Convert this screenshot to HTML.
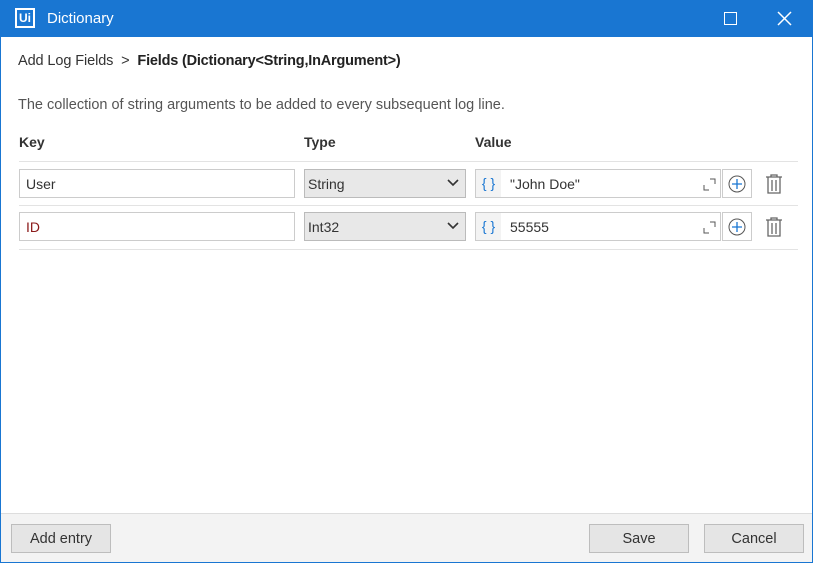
<!DOCTYPE html><html><head><style>
body{margin:0;width:813px;height:563px;overflow:hidden;font-family:"Liberation Sans",sans-serif;font-size:14px;color:#333;background:#fff}
.a{position:absolute;box-sizing:border-box}
.win{left:0;top:0;width:813px;height:563px;border:1px solid #1976d2}
.inp{border:1px solid #ccc;background:#fff;height:29px;padding:6px 6px;}
.sel{background:#e8e8e8;border:1px solid #bbb;height:29px;padding:6px 3px}
.btn{background:#e5e5e5;border:1px solid #bdbdbd;height:29px;text-align:center;line-height:29px;font-size:14.5px}
.hr{height:1px;background:#e3e3e3;left:19px;width:779px}
</style></head><body>
<div class="a win"></div>
<div class="a" style="left:0;top:0;width:813px;height:37px;background:#1976d2"></div>
<div class="a" style="left:15px;top:8px;width:20px;height:20px;border:2px solid #fff;color:#fff;font-size:12px;font-weight:bold;line-height:16px;text-align:center">Ui</div>
<div class="a" style="left:47px;top:10px;color:#fff;font-size:15px">Dictionary</div>
<div class="a" style="left:724px;top:12px;width:13px;height:13px;border:1.5px solid #fff"></div>
<svg class="a" style="left:777px;top:11px" width="15" height="15"><path d="M1 1L14 14M14 1L1 14" stroke="#fff" stroke-width="1.5"/></svg>
<div class="a" style="left:18px;top:53px;font-size:14.5px;letter-spacing:-0.1px">Add Log Fields &nbsp;&gt;&nbsp; <b style="font-weight:bold;color:#222;letter-spacing:-0.2px">Fields (Dictionary&lt;String,InArgument&gt;)</b></div>
<div class="a" style="left:18px;top:97px;color:#555;font-size:14.5px">The collection of string arguments to be added to every subsequent log line.</div>
<div class="a" style="left:19px;top:134px;font-weight:bold">Key</div>
<div class="a" style="left:304px;top:134px;font-weight:bold">Type</div>
<div class="a" style="left:475px;top:134px;font-weight:bold">Value</div>
<div class="a hr" style="top:161px"></div>
<div class="a hr" style="top:205px"></div>
<div class="a hr" style="top:249px"></div>

<div class="a inp" style="left:19px;top:169px;width:276px">User</div>
<div class="a sel" style="left:304px;top:169px;width:162px">String<svg style="position:absolute;right:6px;top:9px" width="12" height="8"><path d="M1 1l5 5 5-5" fill="none" stroke="#333" stroke-width="1.6"/></svg></div>
<div class="a inp" style="left:475px;top:169px;width:246px;padding-left:34px">"John Doe"</div>
<div class="a" style="left:476px;top:170px;width:25px;height:27px;background:#f3f3f3;color:#1976d2;text-align:center;line-height:26px">{ }</div>
<svg class="a" style="left:701px;top:176px" width="16" height="16"><path d="M3 9v5h5M9 3h5v5" fill="none" stroke="#555"/></svg>
<div class="a inp" style="left:722px;top:169px;width:30px"></div>
<svg class="a" style="left:727px;top:174px" width="20" height="20"><circle cx="10" cy="10" r="8" fill="none" stroke="#555"/><path d="M10 5v10M5 10h10" stroke="#1976d2" stroke-width="1.3"/></svg>
<svg class="a" style="left:764px;top:173px" width="20" height="22"><path d="M2 4h16M7 4V2h6v2M4 4v16h12V4M8 7v11M12 7v11" fill="none" stroke="#666" stroke-width="1.3"/></svg>

<div class="a inp" style="left:19px;top:212px;width:276px;color:#8b1a1a">ID</div>
<div class="a sel" style="left:304px;top:212px;width:162px">Int32<svg style="position:absolute;right:6px;top:9px" width="12" height="8"><path d="M1 1l5 5 5-5" fill="none" stroke="#333" stroke-width="1.6"/></svg></div>
<div class="a inp" style="left:475px;top:212px;width:246px;padding-left:34px">55555</div>
<div class="a" style="left:476px;top:213px;width:25px;height:27px;background:#f3f3f3;color:#1976d2;text-align:center;line-height:26px">{ }</div>
<svg class="a" style="left:701px;top:219px" width="16" height="16"><path d="M3 9v5h5M9 3h5v5" fill="none" stroke="#555"/></svg>
<div class="a inp" style="left:722px;top:212px;width:30px"></div>
<svg class="a" style="left:727px;top:217px" width="20" height="20"><circle cx="10" cy="10" r="8" fill="none" stroke="#555"/><path d="M10 5v10M5 10h10" stroke="#1976d2" stroke-width="1.3"/></svg>
<svg class="a" style="left:764px;top:216px" width="20" height="22"><path d="M2 4h16M7 4V2h6v2M4 4v16h12V4M8 7v11M12 7v11" fill="none" stroke="#666" stroke-width="1.3"/></svg>

<div class="a" style="left:1px;top:513px;width:811px;height:49px;background:#f3f3f3;border-top:1px solid #ddd"></div>
<div class="a btn" style="left:11px;top:524px;width:100px">Add entry</div>
<div class="a btn" style="left:589px;top:524px;width:100px">Save</div>
<div class="a btn" style="left:704px;top:524px;width:100px">Cancel</div>
</body></html>
